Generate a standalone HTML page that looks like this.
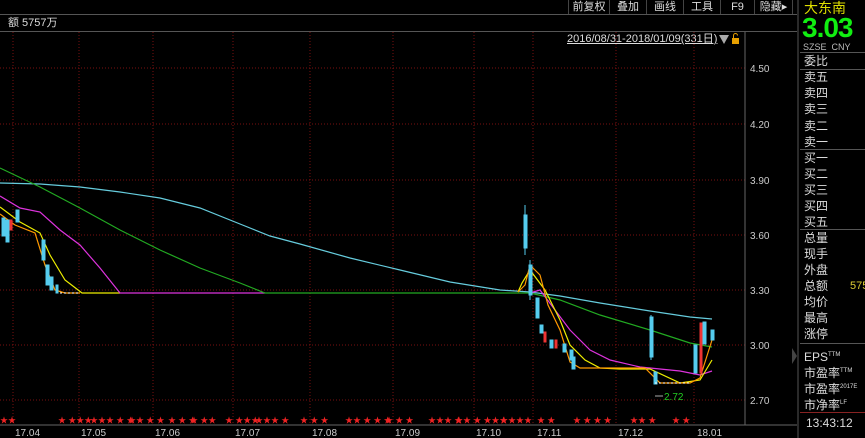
<!DOCTYPE html>
<html><head><meta charset="utf-8"><style>
body{margin:0;background:#000;width:865px;height:438px;overflow:hidden;position:relative;font-family:"Liberation Sans","Noto Sans CJK SC",sans-serif;color:#ccc}
.btn{position:absolute;top:0;height:14px;font-size:11px;line-height:14px;color:#ddd;text-align:center;border-left:1px solid #444}
.rp{position:absolute;left:800px;top:0;width:65px;height:438px}
.r{position:absolute;left:4px;font-size:12px;color:#ddd;line-height:14px}
.hl{position:absolute;left:0;width:65px;height:1px;background:#555}
</style></head><body>
<div style="position:absolute;left:0;top:14px;width:797px;height:1px;background:#555"></div>
<div style="position:absolute;left:0;top:31px;width:797px;height:1px;background:#555"></div>
<div class="btn" style="left:568px;width:40px">前复权</div>
<div class="btn" style="left:609px;width:36px">叠加</div>
<div class="btn" style="left:646px;width:36px">画线</div>
<div class="btn" style="left:683px;width:36px">工具</div>
<div class="btn" style="left:720px;width:33px">F9</div>
<div class="btn" style="left:754px;width:37px;border-right:1px solid #444">隐藏▸</div>
<div style="position:absolute;left:8px;top:16px;font-size:11px;color:#ddd;line-height:14px">额 5757万</div>
<div style="position:absolute;left:567px;top:32px;font-size:11px;color:#ddd;text-decoration:underline;line-height:14px">2016/08/31-2018/01/09(331日)</div>
<svg width="865" height="438" style="position:absolute;left:0;top:0">
<g stroke="#7a1010" stroke-dasharray="1,2" stroke-width="1">
<line x1="0" y1="68" x2="745" y2="68"/><line x1="0" y1="124" x2="745" y2="124"/><line x1="0" y1="180" x2="745" y2="180"/><line x1="0" y1="235" x2="745" y2="235"/><line x1="0" y1="290" x2="745" y2="290"/><line x1="0" y1="345" x2="745" y2="345"/><line x1="0" y1="400" x2="745" y2="400"/>
<line x1="13" y1="32" x2="13" y2="425"/><line x1="79" y1="32" x2="79" y2="425"/><line x1="153" y1="32" x2="153" y2="425"/><line x1="233" y1="32" x2="233" y2="425"/><line x1="310" y1="32" x2="310" y2="425"/><line x1="393" y1="32" x2="393" y2="425"/><line x1="474" y1="32" x2="474" y2="425"/><line x1="533" y1="32" x2="533" y2="425"/><line x1="616" y1="32" x2="616" y2="425"/><line x1="694" y1="32" x2="694" y2="425"/>
</g>
<line x1="745" y1="32" x2="745" y2="425" stroke="#666"/>
<line x1="0" y1="425" x2="797" y2="425" stroke="#666"/>
<line x1="798" y1="0" x2="798" y2="438" stroke="#555"/>
<polygon points="719,35 729,35 724,44" fill="#aaa"/>
<rect x="732" y="38" width="7" height="6" fill="#e8a000"/><path d="M733.5 38v-2.5a2 2 0 0 1 4 0" stroke="#e8a000" fill="none"/>
<g font-size="10" fill="#ccc" font-family="Liberation Sans">
<text x="750" y="72">4.50</text><text x="750" y="128">4.20</text><text x="750" y="184">3.90</text><text x="750" y="239">3.60</text><text x="750" y="294">3.30</text><text x="750" y="349">3.00</text><text x="750" y="404">2.70</text>
<text x="15" y="436">17.04</text><text x="81" y="436">17.05</text><text x="155" y="436">17.06</text><text x="235" y="436">17.07</text><text x="312" y="436">17.08</text><text x="395" y="436">17.09</text><text x="476" y="436">17.10</text><text x="537" y="436">17.11</text><text x="618" y="436">17.12</text><text x="697" y="436">18.01</text>
</g>
<g fill="none" stroke-width="1.2">
<polyline stroke="#6cd" points="0,183 40,184 80,187 120,192 160,198 200,208 240,224 270,236 300,244 350,258 400,270 450,282 500,290 530,292 560,296 600,303 650,311 690,317 712,319"/>
<polyline stroke="#ee0" points="0,207 20,222 40,233 50,255 65,280 82,293 120,293"/>
<polyline stroke="#f90" points="0,214 15,225 35,233 45,265 55,290 65,293 80,293"/>
<polyline stroke="#d3d" points="0,196 20,208 40,212 60,230 80,245 100,268 120,293 265,293"/>
<polyline stroke="#2a2" points="0,168 40,187 80,208 120,230 160,250 200,268 240,283 265,293 530,293 560,300 600,315 650,330 690,343 712,347"/>
<polyline stroke="#d3d" points="530,293 540,290 555,310 570,330 590,350 610,360 640,367 680,371 700,375 712,371"/>
<polyline stroke="#ee0" points="518,292 522,283 530,270 545,290 560,320 570,345 585,360 600,368 620,369 650,369 680,383 700,380 712,360"/>
<polyline stroke="#f90" points="518,292 525,285 530,265 540,275 548,305 560,330 570,362 580,368 645,368 660,383 690,383 700,378 712,340"/>
</g>
<g stroke="#5ce" fill="#5ce">
<line x1="525" y1="205" x2="525" y2="255"/><rect x="524" y="215" width="3" height="33"/>
<line x1="530" y1="260" x2="530" y2="300"/><rect x="529" y="265" width="3" height="30"/>
<rect x="536" y="298" width="3" height="20"/><rect x="540" y="325" width="3" height="8"/>
<rect x="550" y="340" width="3" height="8"/><rect x="563" y="344" width="3" height="8"/><rect x="570" y="350" width="3" height="10"/><rect x="572" y="357" width="3" height="12"/>
<line x1="651" y1="315" x2="651" y2="360"/><rect x="650" y="317" width="3" height="40"/>
<rect x="654" y="372" width="3" height="12"/><rect x="694" y="345" width="3" height="28"/><rect x="703" y="322" width="3" height="22"/><rect x="711" y="330" width="3" height="10"/>
<rect x="2" y="218" width="3" height="18"/><rect x="6" y="220" width="3" height="22"/><rect x="16" y="210" width="3" height="12"/><rect x="42" y="240" width="3" height="20"/><rect x="46" y="265" width="3" height="20"/><rect x="50" y="277" width="3" height="13"/><rect x="56" y="285" width="2" height="8"/>
</g>
<g stroke="#e33" fill="#e33"><rect x="700" y="323" width="2" height="50"/><rect x="544" y="332" width="2" height="10"/><rect x="555" y="340" width="2" height="8"/><rect x="10" y="220" width="2" height="10"/></g>
<line x1="655" y1="383" x2="690" y2="383" stroke="#fff" stroke-dasharray="2,2"/>
<line x1="60" y1="293" x2="80" y2="293" stroke="#fff" stroke-dasharray="2,2"/>
<line x1="655" y1="396" x2="663" y2="396" stroke="#aaa"/>
<text x="664" y="400" font-size="10" fill="#2c2">2.72</text>
<g fill="#e22" font-size="8">
<text x="0" y="423">★★</text><text x="58" y="423">★ ★★★</text><text x="90" y="423">★★★ ★ ★</text><text x="128" y="423">★★ ★ ★</text><text x="168" y="423">★ ★ ★</text><text x="190" y="423">★ ★★</text><text x="225" y="423">★ ★★★</text><text x="255" y="423">★★★ ★</text><text x="300" y="423">★ ★ ★</text><text x="345" y="423">★★ ★ ★ ★</text><text x="385" y="423">★ ★ ★</text><text x="428" y="423">★★★ ★</text><text x="455" y="423">★★ ★ ★★★</text><text x="500" y="423">★★★★</text><text x="537" y="423">★ ★</text><text x="573" y="423">★ ★ ★ ★</text><text x="630" y="423">★★ ★</text><text x="672" y="423">★ ★</text>
</g>
<polygon points="792,348 797,356 792,364" fill="#444"/>
</svg>
<div class="rp">
<div style="position:absolute;left:4px;top:0;font-size:14px;color:#dd0;line-height:16px">大东南</div>
<div style="position:absolute;left:2px;top:14px;font-size:28px;color:#1e1;font-weight:bold;line-height:28px;letter-spacing:-1px">3.03</div>
<div style="position:absolute;left:3px;top:42px;font-size:9px;color:#bbb">SZSE&nbsp; CNY</div>
<div class="hl" style="top:52px"></div>
<div class="r" style="top:54px">委比</div>
<div class="hl" style="top:69px"></div>
<div class="r" style="top:70px">卖五</div><div class="r" style="top:86px">卖四</div><div class="r" style="top:102px">卖三</div><div class="r" style="top:119px">卖二</div><div class="r" style="top:135px">卖一</div>
<div class="hl" style="top:149px"></div>
<div class="r" style="top:151px">买一</div><div class="r" style="top:167px">买二</div><div class="r" style="top:183px">买三</div><div class="r" style="top:199px">买四</div><div class="r" style="top:215px">买五</div>
<div class="hl" style="top:229px"></div>
<div class="r" style="top:231px">总量</div><div class="r" style="top:247px">现手</div><div class="r" style="top:263px">外盘</div><div class="r" style="top:279px">总额</div><div class="r" style="top:295px">均价</div><div class="r" style="top:311px">最高</div><div class="r" style="top:327px">涨停</div>
<div style="position:absolute;left:50px;top:280px;font-size:11px;color:#dc3">575</div>
<div class="hl" style="top:343px"></div>
<div class="r" style="top:348px">EPS<sup style="font-size:6px">TTM</sup></div>
<div class="r" style="top:364px">市盈率<sup style="font-size:6px">TTM</sup></div>
<div class="r" style="top:380px">市盈率<sup style="font-size:6px">2017E</sup></div>
<div class="r" style="top:396px">市净率<sup style="font-size:6px">LF</sup></div>
<div style="position:absolute;left:0;top:412px;width:65px;height:1px;background:#822"></div>
<div style="position:absolute;left:6px;top:416px;font-size:12px;color:#ddd">13:43:12</div>
</div>
</body></html>
